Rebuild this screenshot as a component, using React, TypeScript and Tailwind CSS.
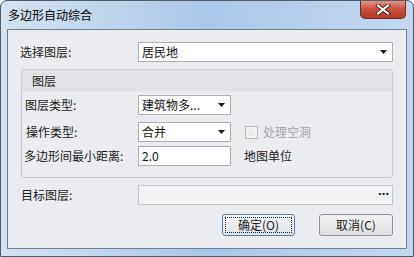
import React from "react";

function Arrow() {
  return (
    <svg width="7" height="4" viewBox="0 0 7 4" className="shrink-0">
      <polygon points="0,0 7,0 3.5,4" fill="#1b1b1b" />
    </svg>
  );
}

function Combo({ text, className }: { text: string; className?: string }) {
  return (
    <div
      className={
        "h-[20px] flex items-center justify-between border border-[#abadb3] bg-white pl-[3px] pr-[5px] " +
        (className ?? "")
      }
    >
      <span className="text-[12px] leading-[16px] text-[#111]">{text}</span>
      <Arrow />
    </div>
  );
}

export default function App() {
  return (
    <div className="w-[414px] h-[257px] flex flex-col px-[6px] pb-[7px] rounded-t-[7px] border border-[#4f5a68] bg-gradient-to-r from-[#d5e2f0] via-[#a9c8ea] to-[#c3d8ef] font-[Noto_Sans_CJK_SC,Noto_Sans,sans-serif] text-[#1a1a1a] overflow-hidden">
      {/* title bar */}
      <div className="h-[28px] flex items-start justify-between shrink-0">
        <div className="pl-[1px] mt-[6px] text-[12px] leading-[16px] text-black">多边形自动综合</div>
        <div className="-mt-[1px] mr-[1px] w-[46px] h-[19px] rounded-b-[5px] border border-t-0 border-[#6e2b25] bg-gradient-to-b from-[#e4a08f] via-[#c9503c] to-[#b23a26] flex items-center justify-center">
          <svg width="16" height="11" viewBox="0 0 16 11">
            <path d="M3 1.5 L13 9.5 M13 1.5 L3 9.5" stroke="#4a2020" strokeWidth="4" strokeLinecap="square" />
            <path d="M3 1.5 L13 9.5 M13 1.5 L3 9.5" stroke="#ffffff" strokeWidth="2" strokeLinecap="square" />
          </svg>
        </div>
      </div>

      {/* client area */}
      <div className="flex-1 border border-[#6e7d91] bg-[#ebecf0] flex flex-col pl-[12px] pr-[13px]">
        {/* row 1 */}
        <div className="mt-[12px] h-[20px] flex items-center">
          <div className="w-[118px] text-[12px] leading-[16px]">选择图层:</div>
          <Combo text="居民地" className="flex-1 pr-[4px]" />
        </div>

        {/* group box */}
        <div className="mt-[7px] ml-[1px] h-[109px] rounded-[3px] border border-[#c9cacd] flex flex-col overflow-hidden">
          <div className="h-[21px] bg-[#e1e2e6] flex items-center pl-[10px] text-[12px] leading-[16px]">图层</div>
          <div className="mt-[4px] h-[20px] flex items-center">
            <div className="w-[116px] pl-[3px] text-[12px] leading-[16px]">图层类型:</div>
            <Combo text="建筑物多..." className="w-[93px]" />
          </div>
          <div className="mt-[7px] h-[20px] flex items-center">
            <div className="w-[116px] pl-[4px] text-[12px] leading-[16px]">操作类型:</div>
            <Combo text="合并" className="w-[93px]" />
            <div className="ml-[14px] w-[13px] h-[13px] border border-[#b9b9bd] bg-[#f4f4f5] p-[2px]">
              <div className="w-full h-full bg-[#ebebed]" />
            </div>
            <span className="ml-[5px] text-[12px] leading-[16px] text-[#a3a3a8]">处理空洞</span>
          </div>
          <div className="mt-[4px] h-[20px] flex items-center">
            <div className="w-[116px] pl-[2px] text-[12px] leading-[16px]">多边形间最小距离:</div>
            <div className="w-[93px] h-[20px] border border-[#abadb3] bg-white pl-[3px] flex items-center text-[12px] leading-[16px] text-[#111]">
              2.0
            </div>
            <span className="ml-[13px] text-[12px] leading-[16px]">地图单位</span>
          </div>
        </div>

        {/* target layer */}
        <div className="mt-[7px] h-[20px] flex items-center">
          <div className="w-[118px] pl-[1px] text-[12px] leading-[16px]">目标图层:</div>
          <div className="flex-1 h-[20px] border border-[#c5c6ca] bg-[#f3f3f5] flex items-center justify-end pr-[3px]">
            <span className="text-[13px] leading-[12px] font-bold text-[#111] -translate-y-[4px] font-[Liberation_Sans,sans-serif]">...</span>
          </div>
        </div>

        {/* buttons */}
        <div className="mt-[9px] flex justify-end gap-[24px]">
          <button className="w-[73px] h-[22px] rounded-[3px] border border-[#5d7fa5] bg-gradient-to-b from-[#f4f6f9] to-[#dfe3ea] p-[2px]">
            <div className="w-full h-full border border-dotted border-[#222] flex items-center justify-center text-[12px] leading-[16px]">
              确定(O)
            </div>
          </button>
          <button className="w-[74px] h-[22px] rounded-[3px] border border-[#8e8f94] bg-gradient-to-b from-[#f4f4f4] to-[#dedee0] flex items-center justify-center text-[12px] leading-[16px]">
            取消(C)
          </button>
        </div>
      </div>
    </div>
  );
}
